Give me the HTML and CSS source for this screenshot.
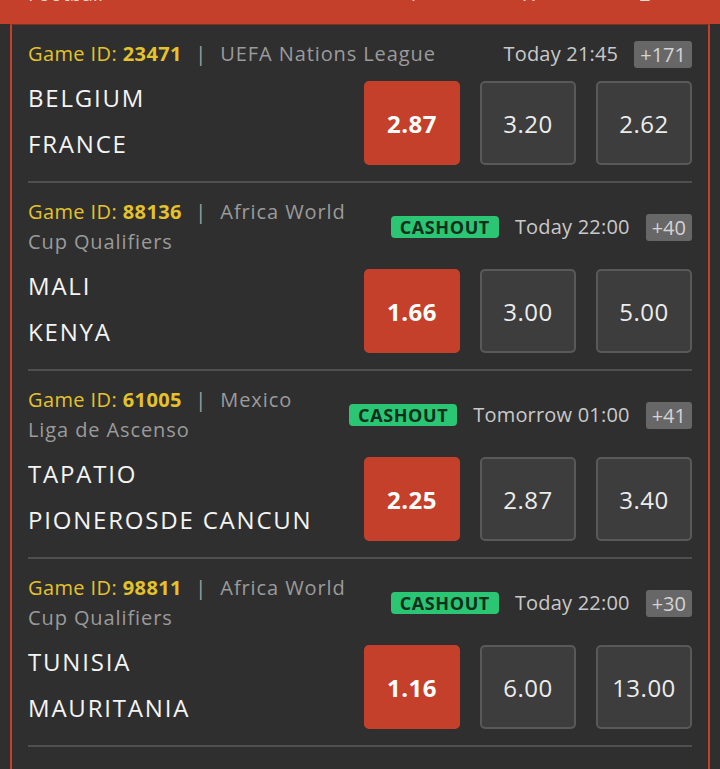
FILE: index.html
```html
<!DOCTYPE html>
<html lang="en">
<head>
    <meta charset="UTF-8">
    <meta name="viewport" content="width=device-width, initial-scale=1.0">
    <title>Football - Matches</title>
    <link rel="stylesheet" href="styles.css">
</head>
<body>
    <div class="sport-header">
        <div class="sport-header-row">
            <span class="sport-name">Football</span>
            <span class="col-label">1</span>
            <span class="col-label">X</span>
            <span class="col-label">2</span>
        </div>
    </div>

    <div class="event-list">
        <div class="event">
            <div class="event-meta">
                <div class="event-info">
                    <span class="game-id">Game ID: <b>23471</b></span>
                    <span class="divider">|</span>
                    <span class="league">UEFA Nations League</span>
                </div>
                <div class="event-extra">
                    <span class="event-time">Today 21:45</span>
                    <span class="more-markets">+171</span>
                </div>
            </div>
            <div class="event-body">
                <div class="teams">
                    <div class="team">BELGIUM</div>
                    <div class="team">FRANCE</div>
                </div>
                <div class="odds">
                    <button class="odd active">2.87</button>
                    <button class="odd">3.20</button>
                    <button class="odd">2.62</button>
                </div>
            </div>
        </div>

        <div class="event">
            <div class="event-meta">
                <div class="event-info">
                    <span class="game-id">Game ID: <b>88136</b></span>
                    <span class="divider">|</span>
                    <span class="league">Africa World Cup Qualifiers</span>
                </div>
                <div class="event-extra">
                    <span class="cashout">CASHOUT</span>
                    <span class="event-time">Today 22:00</span>
                    <span class="more-markets">+40</span>
                </div>
            </div>
            <div class="event-body">
                <div class="teams">
                    <div class="team">MALI</div>
                    <div class="team">KENYA</div>
                </div>
                <div class="odds">
                    <button class="odd active">1.66</button>
                    <button class="odd">3.00</button>
                    <button class="odd">5.00</button>
                </div>
            </div>
        </div>

        <div class="event">
            <div class="event-meta">
                <div class="event-info">
                    <span class="game-id">Game ID: <b>61005</b></span>
                    <span class="divider">|</span>
                    <span class="league">Mexico Liga de Ascenso</span>
                </div>
                <div class="event-extra">
                    <span class="cashout">CASHOUT</span>
                    <span class="event-time">Tomorrow 01:00</span>
                    <span class="more-markets">+41</span>
                </div>
            </div>
            <div class="event-body">
                <div class="teams">
                    <div class="team">TAPATIO</div>
                    <div class="team">PIONEROSDE CANCUN</div>
                </div>
                <div class="odds">
                    <button class="odd active">2.25</button>
                    <button class="odd">2.87</button>
                    <button class="odd">3.40</button>
                </div>
            </div>
        </div>

        <div class="event">
            <div class="event-meta">
                <div class="event-info">
                    <span class="game-id">Game ID: <b>98811</b></span>
                    <span class="divider">|</span>
                    <span class="league">Africa World Cup Qualifiers</span>
                </div>
                <div class="event-extra">
                    <span class="cashout">CASHOUT</span>
                    <span class="event-time">Today 22:00</span>
                    <span class="more-markets">+30</span>
                </div>
            </div>
            <div class="event-body">
                <div class="teams">
                    <div class="team">TUNISIA</div>
                    <div class="team">MAURITANIA</div>
                </div>
                <div class="odds">
                    <button class="odd active">1.16</button>
                    <button class="odd">6.00</button>
                    <button class="odd">13.00</button>
                </div>
            </div>
        </div>
    </div>
</body>
</html>
```

FILE: styles.css
```css
* {
    margin: 0;
    padding: 0;
    box-sizing: border-box;
}

body {
    font-family: 'Open Sans', 'Liberation Sans', sans-serif;
    background: #2f2f2f;
    color: #f2f2f2;
    min-height: 100vh;
}

/* red sport bar, scrolled mostly out of view */
.sport-header {
    height: 24px;
    background: #c5402a;
    overflow: hidden;
}

.sport-header-row {
    display: flex;
    gap: 20px;
    margin-top: -18px;
    padding: 0 27px 0 28px;
    font-size: 20px;
    line-height: 24px;
    color: #f3d6cf;
}

.sport-name {
    flex: 1;
}

.col-label {
    width: 96px;
    text-align: center;
}

.event-list {
    margin: 0 10px;
    min-height: calc(100vh - 24px);
    border-left: 2px solid #c5402a;
    border-right: 2px solid #c5402a;
    border-top: 1px solid #7d2f22;
    padding: 0 16px;
}

.event {
    padding: 14px 0 16px;
    border-bottom: 2px solid #505050;
}

.event-meta {
    display: flex;
    align-items: center;
    gap: 18px;
    font-size: 20px;
    line-height: 30px;
}

.event-info {
    flex: 1;
    min-width: 0;
    color: #9b9b9b;
}

.game-id {
    color: #e4c22c;
    letter-spacing: 0.4px;
}

.game-id b {
    font-weight: 700;
}

.divider {
    margin: 0 9px 0 8px;
    color: #a0a0a0;
}

.league {
    letter-spacing: 0.9px;
}

.event-extra {
    display: flex;
    align-items: center;
    gap: 16px;
}

.cashout {
    background: #2bc673;
    color: #0e2f1c;
    font-size: 18px;
    font-weight: 700;
    line-height: 22px;
    letter-spacing: 0.6px;
    padding: 0 9px;
    border-radius: 4px;
}

.event-time {
    color: #c9c9c9;
    letter-spacing: 0.2px;
}

.more-markets {
    background: #676767;
    color: #d4d4d4;
    line-height: 27px;
    padding: 0 6px;
    border-radius: 3px;
}

.event-body {
    display: flex;
    align-items: center;
    margin-top: 12px;
}

.teams {
    flex: 1;
    margin: -6px 0 -2px;
}

.team {
    font-size: 24px;
    font-weight: 500;
    line-height: 46px;
    letter-spacing: 1.8px;
    color: #f4f4f4;
}

.odds {
    display: flex;
    gap: 20px;
}

.odd {
    width: 96px;
    height: 84px;
    background: #3d3d3d;
    border: 2px solid #595959;
    border-radius: 5px;
    color: #ececec;
    font-family: inherit;
    font-size: 24px;
    letter-spacing: 0.5px;
}

.odd.active {
    background: #c5402a;
    border-color: #c5402a;
    color: #fff;
    font-weight: 700;
}
```
